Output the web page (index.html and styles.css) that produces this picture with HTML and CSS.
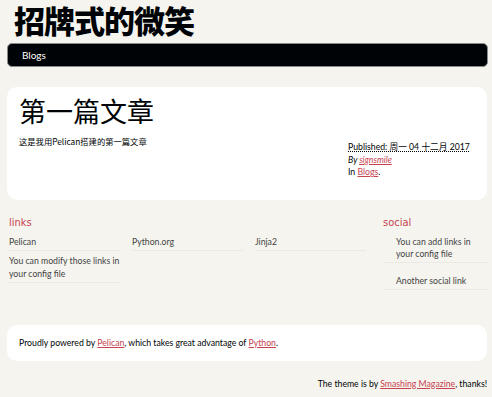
FILE: index.html
```html
<!DOCTYPE html>
<html lang="zh">
<head>
    <meta charset="UTF-8">
    <title>招牌式的微笑</title>
    <link rel="stylesheet" href="styles.css">
</head>
<body>

    <header class="banner">
        <h1 class="site-title"><a href="#">招牌式的微笑</a></h1>
        <nav class="menu">
            <a href="#">Blogs</a>
        </nav>
    </header>

    <section class="content">
        <article class="entry">
            <h2 class="entry-title"><a href="#">第一篇文章</a></h2>
            <div class="entry-body">
                <p class="entry-text">这是我用Pelican搭建的第一篇文章</p>
                <footer class="post-info">
                    <abbr class="published" title="2017-12-04">Published: 周一 04 十二月 2017</abbr>
                    <address class="author">By <a href="#">signsmile</a></address>
                    <p>In <a href="#">Blogs</a>.</p>
                </footer>
            </div>
        </article>
    </section>

    <section class="extras">
        <div class="blogroll">
            <h2>links</h2>
            <ul>
                <li><a href="#">Pelican</a></li>
                <li><a href="#">Python.org</a></li>
                <li><a href="#">Jinja2</a></li>
                <li><a href="#">You can modify those links in your config file</a></li>
            </ul>
        </div>
        <div class="social">
            <h2>social</h2>
            <ul>
                <li><a href="#">You can add links in your config file</a></li>
                <li><a href="#">Another social link</a></li>
            </ul>
        </div>
    </section>

    <footer class="contentinfo">
        <address>
            Proudly powered by <a href="#">Pelican</a>, which takes great advantage of <a href="#">Python</a>.
        </address>
    </footer>

    <p class="credits">The theme is by <a href="#">Smashing Magazine</a>, thanks!</p>

</body>
</html>
```

FILE: styles.css
```css
body {
    font-family: Lato, "Noto Sans CJK SC", sans-serif;
    font-size: 8.7px;
    background-color: #f5f4ef;
    color: #000305;
    margin: 0;
    padding: 0 5px 0 7px;
}

a {
    color: #c74350;
    text-decoration: underline;
}

.site-title {
    font-family: "Noto Sans CJK SC", sans-serif;
    font-size: 31px;
    font-weight: 900;
    letter-spacing: -1px;
    line-height: 40px;
    margin: 0 0 3px 7px;
}

.site-title a {
    color: #000305;
    text-decoration: none;
}

.menu {
    background-color: #000305;
    border: 1px solid #8a8a8a;
    border-radius: 5px;
    height: 22px;
    width: 451px;
    display: flex;
    align-items: center;
    padding: 0 14px;
}

.menu a {
    color: #fff;
    text-decoration: none;
    font-size: 10px;
}

.content {
    background: #fff;
    border-radius: 10px;
    margin-top: 20px;
    padding: 6px 12px 21px;
}

.entry-title {
    font-family: "Noto Sans CJK SC", sans-serif;
    font-size: 27px;
    font-weight: 400;
    line-height: 36px;
    margin: 0;
}

.entry-title a {
    color: #000305;
    text-decoration: none;
}

.entry-body {
    display: flex;
    justify-content: space-between;
    align-items: flex-start;
}

.entry-text {
    font-family: "Noto Sans CJK SC", sans-serif;
    font-size: 8.3px;
    line-height: 12px;
    margin: 6px 0 0;
}

.post-info {
    width: 127px;
    margin-top: 12px;
    line-height: 12.5px;
}

.post-info .published {
    display: block;
    text-decoration: underline dotted;
}

.post-info .author {
    font-style: italic;
}

.post-info p {
    margin: 0;
}

.extras {
    display: flex;
    justify-content: space-between;
    padding: 16px 0 0 2px;
}

.extras h2 {
    font-family: "DejaVu Sans Condensed", sans-serif;
    font-size: 11px;
    font-weight: 400;
    line-height: 14px;
    color: #c74350;
    margin: 0 0 2px;
}

.extras ul {
    list-style: none;
    margin: 0;
    padding: 0;
}

.extras li {
    border-bottom: 1px solid #eae9e4;
    line-height: 13px;
}

.extras a {
    color: #444;
    text-decoration: none;
}

.blogroll {
    width: 352px;
}

.blogroll ul {
    display: grid;
    grid-template-columns: repeat(3, 111px);
    column-gap: 12px;
}

.blogroll li {
    padding: 3px 0 2px;
}

.social {
    width: 104px;
}

.social li {
    line-height: 12px;
    padding: 4px 0 2px 13px;
    margin-bottom: 8px;
}

.contentinfo {
    background: #fff;
    border-radius: 10px;
    margin-top: 27px;
    padding: 13px 12px;
}

.contentinfo address {
    font-style: normal;
    line-height: 10px;
}

.credits {
    text-align: right;
    line-height: 10px;
    margin: 18px 0 0;
}
```
